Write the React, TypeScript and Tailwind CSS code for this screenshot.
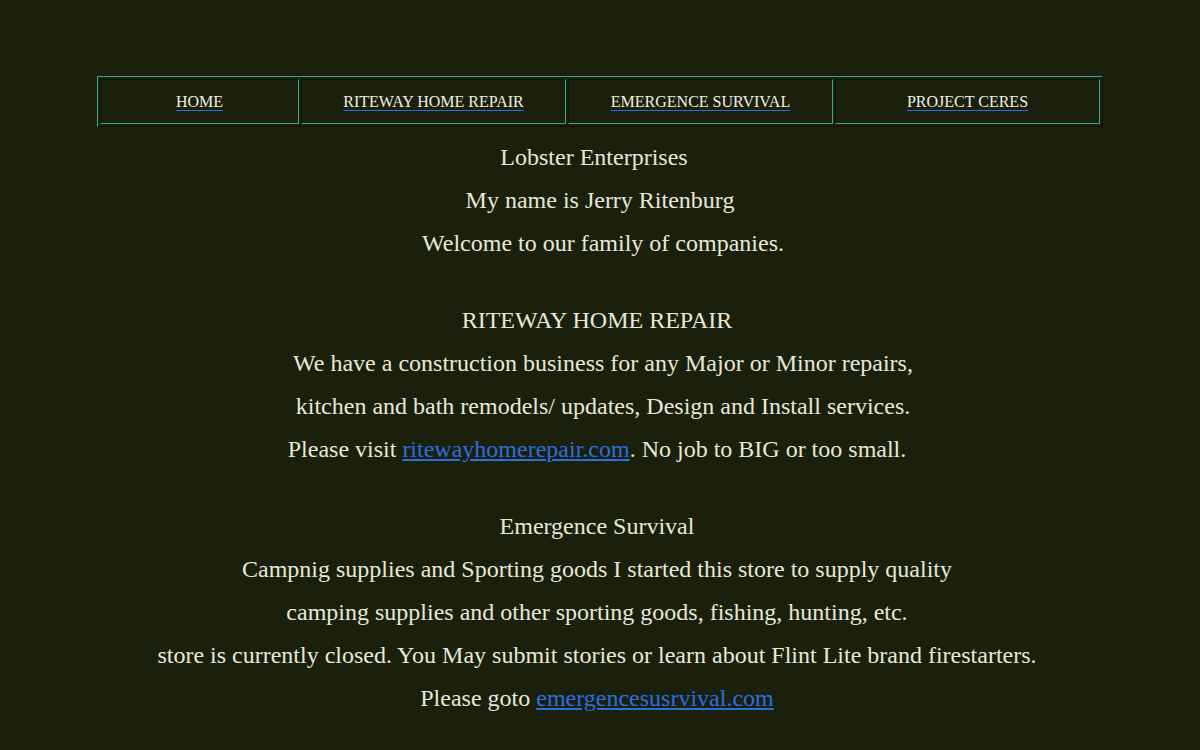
import React from "react";

const navItems = [
  { label: "HOME", w: "w-[199px]" },
  { label: "RITEWAY HOME REPAIR", w: "flex-1" },
  { label: "EMERGENCE SURVIVAL", w: "flex-1" },
  { label: "PROJECT CERES", w: "flex-1" },
];

function Line({ children, cls = "pr-[6px]" }: { children: React.ReactNode; cls?: string }) {
  return <p className={`h-[43px] leading-[43px] ${cls}`}>{children}</p>;
}

export default function App() {
  return (
    <div
      className="min-h-[750px] bg-[#1a200c] text-[#e8e8d8] pt-[76px]"
      style={{ fontFamily: '"Liberation Serif", "Times New Roman", serif' }}
    >
      <div className="ml-[97px] w-[1006px] h-[51px] flex gap-[2px] p-[2px] border border-t-[#3aa796] border-l-[#3aa796] border-b-[#0c1306] border-r-[#0c1306]">
        {navItems.map((n) => (
          <div
            key={n.label}
            className={`${n.w} flex items-center justify-center border border-t-[#0c1306] border-l-[#0c1306] border-b-[#3aa796] border-r-[#3aa796]`}
          >
            <a
              href="#"
              className="text-[16px] text-[#f2f0e2] underline decoration-[#2d6fd6] underline-offset-[3px]"
            >
              {n.label}
            </a>
          </div>
        ))}
      </div>
      <div className="text-center text-[24px] pt-[9px]">
        <Line cls="pr-[12px]">Lobster Enterprises</Line>
        <Line cls="">My name is Jerry Ritenburg</Line>
        <Line cls="pl-[6px]">Welcome to our family of companies.</Line>
        <div className="h-[34px]" />
        <Line>RITEWAY HOME REPAIR</Line>
        <Line cls="pl-[6px]">We have a construction business for any Major or Minor repairs,</Line>
        <Line cls="pl-[6px]">kitchen and bath remodels/ updates, Design and Install services.</Line>
        <Line>
          Please visit{" "}
          <a href="#" className="text-[#2a6ee0] underline">
            ritewayhomerepair.com
          </a>
          . No job to BIG or too small.
        </Line>
        <div className="h-[34px]" />
        <Line>Emergence Survival</Line>
        <Line>Campnig supplies and Sporting goods I started this store to supply quality</Line>
        <Line>camping supplies and other sporting goods, fishing, hunting, etc.</Line>
        <Line>store is currently closed. You May submit stories or learn about Flint Lite brand firestarters.</Line>
        <Line>
          Please goto{" "}
          <a href="#" className="text-[#2a6ee0] underline">
            emergencesusrvival.com
          </a>
        </Line>
      </div>
    </div>
  );
}
